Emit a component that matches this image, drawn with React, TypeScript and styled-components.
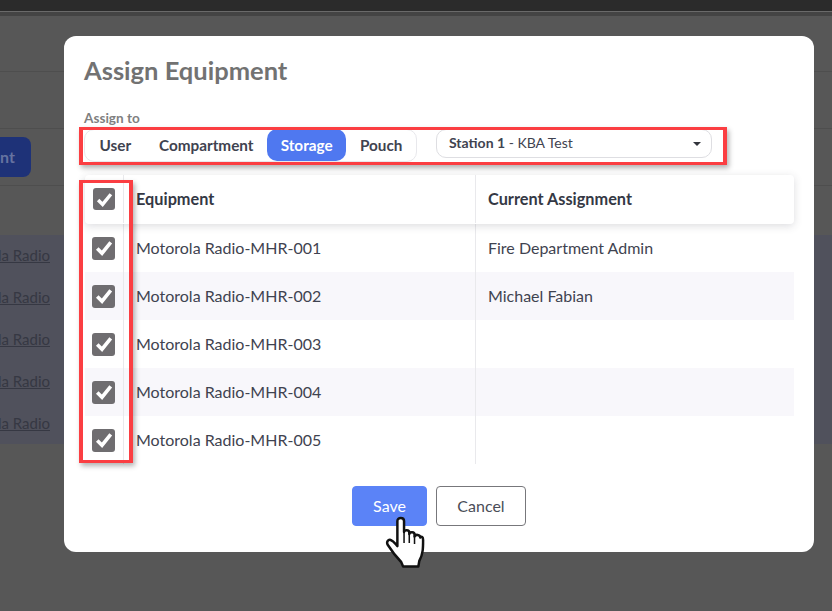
import React from 'react';
import styled, { createGlobalStyle } from 'styled-components';

const GlobalStyle = createGlobalStyle`
    html, body {
        margin: 0;
        padding: 0;
        background: #575757;
    }
    body {
        font-family: 'Lato', 'Liberation Sans', sans-serif;
    }
`

const Page = styled.div`
    position: relative;
    width: 832px;
    height: 611px;
    overflow: hidden;
    background: #575757;
`

const TopBar = styled.div`
    height: 11px;
    background: #2b2b2b;
    border-bottom: 1px solid #6a6a6a;
`

const TopBarShade = styled.div`
    height: 4px;
    background: #444444;
`

const Band = styled.div<{ $height: number }>`
    height: ${p => p.$height}px;
    box-sizing: border-box;
    border-bottom: 1px solid #4e4e4e;
    display: flex;
    align-items: center;
`

const GhostButton = styled.div`
    width: 31px;
    height: 40px;
    box-sizing: border-box;
    padding-right: 17px;
    background: #1e3278;
    border-radius: 0 8px 8px 0;
    color: #6673a0;
    font-size: 16px;
    font-weight: 700;
    line-height: 40px;
    text-align: right;
    white-space: nowrap;
`

const GhostTable = styled.div`
    margin-top: 49px;
    background: #50515c;
    height: 209px;
    overflow: hidden;
`

const GhostRow = styled.div`
    height: 42px;
    box-sizing: border-box;
    padding-bottom: 2px;
    display: flex;
    align-items: center;
    justify-content: flex-end;
    width: 50px;
    font-size: 15px;
    color: #363843;
    text-decoration: underline;
    white-space: nowrap;
    overflow: hidden;
`

const Modal = styled.div`
    position: absolute;
    left: 64px;
    top: 36px;
    width: 750px;
    height: 516px;
    box-sizing: border-box;
    background: #ffffff;
    border-radius: 12px;
    padding: 19px 20px 0 20px;
`

const Title = styled.h2`
    margin: 0;
    font-size: 25.5px;
    line-height: 30px;
    font-weight: 700;
    color: #727272;
`

const FieldLabel = styled.div`
    margin-top: 25px;
    font-size: 13.6px;
    line-height: 16px;
    font-weight: 700;
    color: #7f7f7f;
`

const AssignRow = styled.div`
    display: flex;
    align-items: flex-start;
    gap: 19px;
    margin-top: 3px;
`

const Segments = styled.div`
    display: flex;
    width: 333px;
    height: 33px;
    box-sizing: border-box;
    border: 1px solid #e8e8ec;
    border-radius: 10px;
`

const Segment = styled.div<{ $active?: boolean; $width: number }>`
    width: ${p => p.$width}px;
    height: 32px;
    margin-top: -1px;
    display: flex;
    align-items: center;
    justify-content: center;
    border-radius: 10px;
    font-size: 15.3px;
    font-weight: 700;
    color: ${p => (p.$active ? '#ffffff' : '#3f4350')};
    background: ${p => (p.$active ? '#4f78f0' : 'transparent')};
`

const SelectBox = styled.div`
    width: 276px;
    height: 29px;
    box-sizing: border-box;
    border: 1px solid #dedee2;
    border-radius: 10px;
    display: flex;
    align-items: center;
    justify-content: space-between;
    padding: 0 10px 2px 12px;
    font-size: 14px;
    color: #3f4350;

    b {
        font-weight: 700;
    }
`

const Caret = styled.span`
    width: 0;
    height: 0;
    margin-top: 2px;
    border-left: 4px solid transparent;
    border-right: 4px solid transparent;
    border-top: 4px solid #33353d;
`

const TableWrap = styled.div`
    margin: 13px 0 0 1px;
    width: 709px;
`

const HeaderRow = styled.div`
    position: relative;
    z-index: 1;
    display: grid;
    grid-template-columns: 38px 352px 1fr;
    height: 49px;
    padding-bottom: 1px;
    box-sizing: border-box;
    background: #ffffff;
    border-radius: 4px;
    box-shadow: 0 2px 8px rgba(60, 60, 80, 0.18);
    font-weight: 700;
    font-size: 16.3px;
    color: #343844;
`

const Row = styled.div<{ $shaded?: boolean }>`
    display: grid;
    grid-template-columns: 38px 352px 1fr;
    height: 48px;
    background: ${p => (p.$shaded ? '#f8f7fb' : '#ffffff')};
    font-size: 16px;
    color: #3f4350;
`

const Cell = styled.div`
    display: flex;
    align-items: center;
    padding: 0 0 2px 12px;
    border-left: 1px solid #e9e9ec;
`

const CheckCell = styled.div`
    display: flex;
    align-items: center;
    justify-content: center;
`

const CheckBox = styled.div<{ $size: number }>`
    width: ${p => p.$size}px;
    height: ${p => p.$size}px;
    margin-left: ${p => (p.$size === 23 ? '-1px' : '0')};
    background: #6f6d70;
    border-radius: 3px;
    display: flex;
    align-items: center;
    justify-content: center;
`

const Actions = styled.div`
    display: flex;
    justify-content: center;
    gap: 9px;
    margin-top: 22px;
`

const Button = styled.div<{ $primary?: boolean }>`
    height: 40px;
    box-sizing: border-box;
    padding-bottom: 2px;
    width: ${p => (p.$primary ? '75px' : '90px')};
    display: flex;
    align-items: center;
    justify-content: center;
    border-radius: 4px;
    font-size: 16px;
    color: ${p => (p.$primary ? '#ffffff' : '#4a4d57')};
    background: ${p => (p.$primary ? '#5b83f7' : '#ffffff')};
    border: 1px solid ${p => (p.$primary ? '#5b83f7' : '#77777b')};
`

const RedBox = styled.div<{ $l: number; $t: number; $w: number; $h: number }>`
    position: absolute;
    z-index: 2;
    left: ${p => p.$l}px;
    top: ${p => p.$t}px;
    width: ${p => p.$w}px;
    height: ${p => p.$h}px;
    box-sizing: border-box;
    border-style: solid;
    border-color: #fb3e42;
    border-width: 3px 4px;
    box-shadow: 2px 3px 5px rgba(0, 0, 0, 0.3);
`

const Cursor = styled.svg`
    position: absolute;
    z-index: 3;
    left: 385px;
    top: 516px;
`

const Check = ({ size }: { size: number }) => (
    <svg width={size} height={size} viewBox="0 0 20 20">
        <path d="M2.5 10.5 L7.8 15.8 L17.5 3.8" fill="none" stroke="#ffffff" strokeWidth="4" />
    </svg>
)

const rows = [
    { name: 'Motorola Radio-MHR-001', assignment: 'Fire Department Admin' },
    { name: 'Motorola Radio-MHR-002', assignment: 'Michael Fabian' },
    { name: 'Motorola Radio-MHR-003', assignment: '' },
    { name: 'Motorola Radio-MHR-004', assignment: '' },
    { name: 'Motorola Radio-MHR-005', assignment: '' },
]

const App: React.FunctionComponent = () => {
    return (
        <Page>
            <GlobalStyle />
            <TopBar />
            <TopBarShade />
            <Band $height={56} />
            <Band $height={57} />
            <Band $height={57}>
                <GhostButton>nt</GhostButton>
            </Band>
            <GhostTable>
                {[0, 1, 2, 3, 4].map(i => (
                    <GhostRow key={i}>Motorola Radio</GhostRow>
                ))}
            </GhostTable>

            <Modal>
                <Title>Assign Equipment</Title>
                <FieldLabel>Assign to</FieldLabel>
                <AssignRow>
                    <Segments>
                        <Segment $width={61}>User</Segment>
                        <Segment $width={122}>Compartment</Segment>
                        <Segment $width={80} $active>Storage</Segment>
                        <Segment $width={70}>Pouch</Segment>
                    </Segments>
                    <SelectBox>
                        <span><b>Station 1</b> - KBA Test</span>
                        <Caret />
                    </SelectBox>
                </AssignRow>
                <TableWrap>
                    <HeaderRow>
                        <CheckCell><CheckBox $size={22}><Check size={17} /></CheckBox></CheckCell>
                        <Cell>Equipment</Cell>
                        <Cell>Current Assignment</Cell>
                    </HeaderRow>
                    {rows.map((row, i) => (
                        <Row key={row.name} $shaded={i % 2 === 1}>
                            <CheckCell><CheckBox $size={23}><Check size={18} /></CheckBox></CheckCell>
                            <Cell>{row.name}</Cell>
                            <Cell>{row.assignment}</Cell>
                        </Row>
                    ))}
                </TableWrap>
                <Actions>
                    <Button $primary>Save</Button>
                    <Button>Cancel</Button>
                </Actions>
            </Modal>

            <RedBox $l={79} $t={127} $w={648} $h={38} />
            <RedBox $l={79} $t={180} $w={54} $h={283} />

            <Cursor width="40" height="53" viewBox="0 0 42 53" preserveAspectRatio="none">
                <path
                    d="M13 5 C13 1 20 1 20 5 L20 16 C20 13.5 25.5 13.5 25.5 16.5 L25.5 18 C26 15.5 31 15.5 31 18.5 L31 20.5 C32 18 37 18.5 37 21.5 C38.5 20 40 21 40 24 C40 32 40 38 36 45 L35 50.5 L19 50.5 L17 46 C12 41 7 35 3 29 C1 26 3.5 23 6 24 C9 25 11 28 13 30 Z"
                    fill="#ffffff"
                    stroke="#111111"
                    strokeWidth="2.6"
                    strokeLinejoin="round"
                />
                <path d="M20 16 L20 27 M25.5 18 L25.5 27 M31 20 L31 28" stroke="#111111" strokeWidth="1.6" fill="none" />
            </Cursor>
        </Page>
    )
}

export default App;
